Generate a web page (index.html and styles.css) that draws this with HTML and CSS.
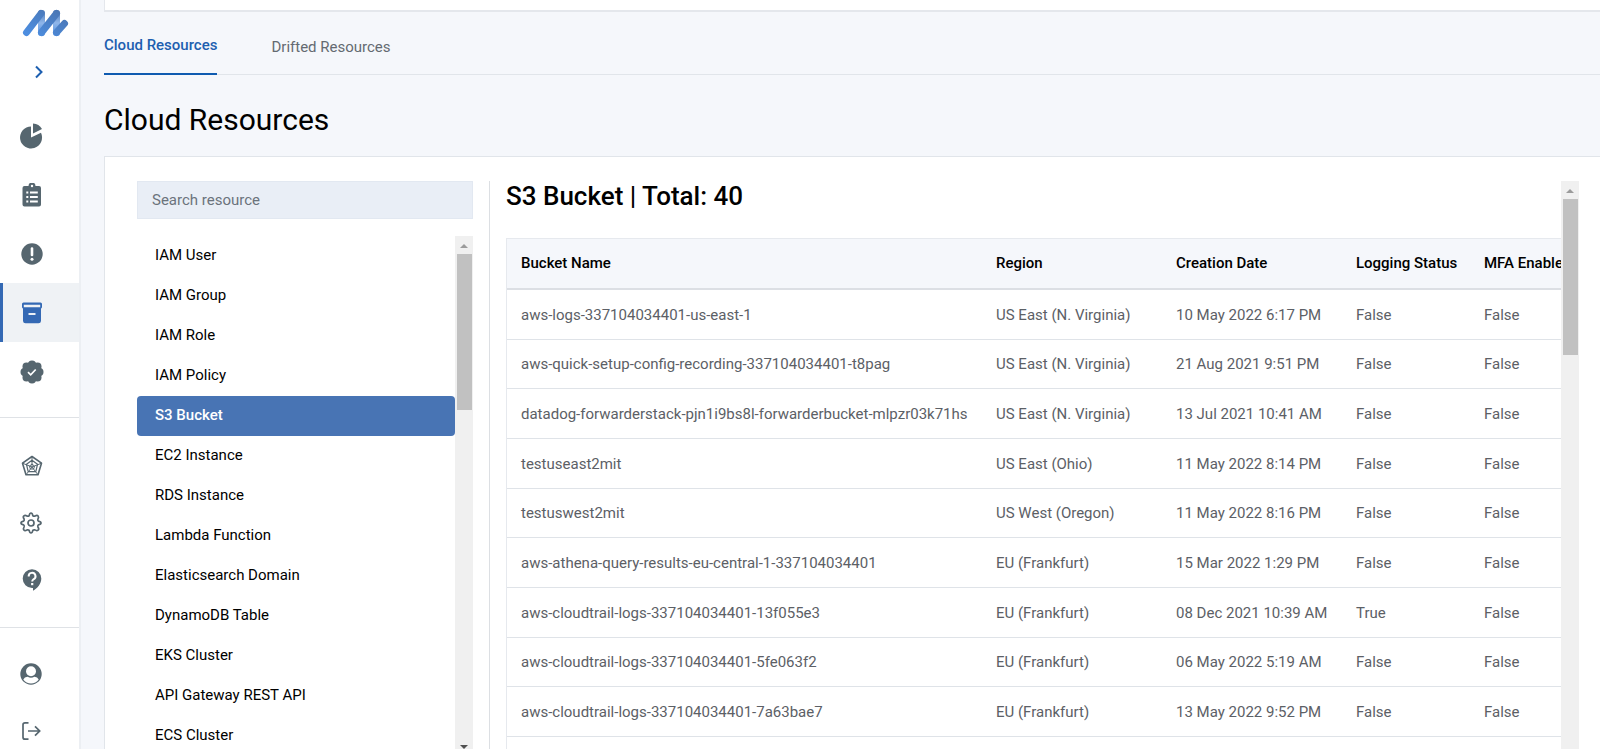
FILE: index.html
```html
<!DOCTYPE html>
<html lang="en">
<head>
<meta charset="utf-8">
<title>Cloud Resources</title>
<link rel="stylesheet" href="styles.css">
</head>
<body>
<div class="app">
  <nav class="sidebar" aria-label="Main">
    <a class="logo" href="#" aria-label="Home">
      <svg width="48" height="30" viewBox="0 0 48 30">
        <defs>
          <linearGradient id="up" x1="0" y1="1" x2="1" y2="0"><stop offset="0" stop-color="#4d8ee0"/><stop offset="1" stop-color="#4a76b4"/></linearGradient>
          <linearGradient id="down" x1="0" y1="0" x2="0" y2="1"><stop offset="0" stop-color="#4a76b4"/><stop offset=".5" stop-color="#8fb6ea"/><stop offset="1" stop-color="#4d8ee0"/></linearGradient>
        </defs>
        <rect x="16" y="2" width="7" height="26" rx="3" fill="url(#down)"/>
        <rect x="31" y="2" width="7" height="26" rx="3" fill="url(#down)"/>
        <g fill="none" stroke="url(#up)" stroke-width="7" stroke-linecap="round">
          <path d="M4.500 24.500 19 5.500M19.500 24.500 34.500 5.500M34.500 24.500 42.500 15.500"/>
        </g>
      </svg>
    </a>
    <button class="expand" aria-label="Expand menu">
      <svg width="10" height="14" viewBox="0 0 10 14"><path d="M2 1.500 7.500 7 2 12.500" fill="none" stroke="#1d5fb0" stroke-width="2"/></svg>
    </button>
    <div class="group group-main">
      <a class="item wide" href="#" aria-label="Dashboard">
        <svg width="24" height="26" viewBox="0 0 24 26" fill="currentColor"><path d="M12 3.500V14.500L22 9.800A11 11 0 1 1 12 3.500Z"/><path d="M14 .5A10.500 10.500 0 0 1 23 6L14 10.500Z"/></svg>
      </a>
      <a class="item" href="#" aria-label="Reports">
        <svg width="20" height="24" viewBox="0 0 20 24"><path fill="currentColor" d="M2.500 3H6.500A3.500 3.500 0 0 1 13.500 3H17A2 2 0 0 1 19 5V21.500A2 2 0 0 1 17 23.500H2.500A2 2 0 0 1 .5 21.500V5A2 2 0 0 1 2.500 3Z"/><circle cx="10" cy="3" r="1.200" fill="#fff"/><path stroke="#fff" stroke-width="1.800" d="M4.300 9.500H6.300M8 9.500H15.800M4.300 14H6.300M8 14H15.800M4.300 18.500H6.300M8 18.500H15.800"/></svg>
      </a>
      <a class="item" href="#" aria-label="Alerts">
        <svg width="22" height="22" viewBox="0 0 22 22"><circle cx="11" cy="11" r="10.700" fill="currentColor"/><path d="M11 5.500V12" stroke="#fff" stroke-width="2.600" stroke-linecap="round"/><circle cx="11" cy="16.300" r="1.500" fill="#fff"/></svg>
      </a>
      <a class="item active" href="#" aria-label="Resources">
        <svg width="20" height="22" viewBox="0 0 20 22"><path fill="currentColor" fill-rule="evenodd" d="M1.500.5H18.500A1.500 1.500 0 0 1 20 2V5A2 2 0 0 1 19 6.500V19A2.500 2.500 0 0 1 16.500 21.300H3.500A2.500 2.500 0 0 1 1 19V6.500A2 2 0 0 1 0 5V2A1.500 1.500 0 0 1 1.500.5ZM1.800 2.700V5.300H18.200V2.700Z"/><path d="M6.500 12H13.500" stroke="#fff" stroke-width="1.800"/></svg>
      </a>
      <a class="item" href="#" aria-label="Compliance">
        <svg width="24" height="24" viewBox="0 0 24 24"><g fill="currentColor"><circle cx="12" cy="12" r="10"/><circle cx="12" cy="4.500" r="4"/><circle cx="17.500" cy="6.500" r="4"/><circle cx="19.500" cy="12" r="4"/><circle cx="17.500" cy="17.500" r="4"/><circle cx="12" cy="19.500" r="4"/><circle cx="6.500" cy="17.500" r="4"/><circle cx="4.500" cy="12" r="4"/><circle cx="6.500" cy="6.500" r="4"/></g><path d="M8 12.200 10.700 14.800 15.700 9.500" fill="none" stroke="#fff" stroke-width="1.700"/></svg>
      </a>
    </div>
    <div class="group group-tools">
      <a class="item" href="#" aria-label="Coverage">
        <svg width="22" height="22" viewBox="0 0 22 22" fill="none" stroke="currentColor" stroke-width="1.600" stroke-linejoin="round"><path d="M11 1.500 20.500 8.200 17 19.800H5L1.500 8.200Z"/><path d="M11 5.300 16.500 9.300 14.800 16.600H7.200L5.500 9.300Z" stroke-width="1.200"/><path d="M11 9 13.600 11.200 12.600 14H9.400L8.400 11.200Z M11 1.500V12M1.500 8.200 11 12 20.500 8.200M5 19.800 11 12 17 19.800" stroke-width="1"/></svg>
      </a>
      <a class="item wide" href="#" aria-label="Settings">
        <svg width="22" height="22" viewBox="0 0 22 22" fill="none" stroke="currentColor" stroke-width="1.700" stroke-linejoin="round"><circle cx="11" cy="11" r="3"/><path d="M9.200 3.600Q9.700 1 11 1T12.800 3.600Q13.600 4.500 14.900 4.100Q17.100 2.600 18.100 3.900T17.900 7.100Q17.500 8.400 18.400 9.200Q21 9.700 21 11T18.400 12.800Q17.500 13.600 17.900 14.900Q19.400 17.100 18.100 18.100T14.900 17.900Q13.600 17.500 12.800 18.400Q12.300 21 11 21T9.200 18.400Q8.400 17.500 7.100 17.900Q4.900 19.400 3.900 18.100T4.100 14.900Q4.500 13.600 3.600 12.800Q1 12.300 1 11T3.600 9.200Q4.500 8.400 4.100 7.100Q2.600 4.900 3.900 3.900T7.100 4.100Q8.400 4.500 9.200 3.600Z"/></svg>
      </a>
      <a class="item" href="#" aria-label="Help">
        <svg width="20" height="22" viewBox="0 0 20 22"><path fill="currentColor" d="M10 .3A9.300 9.300 0 0 1 19.300 9.600C19.300 14.800 15.500 19.500 11 21.700V18.900H10A9.300 9.300 0 0 1 10 .3Z"/><path d="M6.700 7.500A3.400 3.400 0 1 1 11.500 10.300Q10.200 11.200 10.200 12.600" fill="none" stroke="#fff" stroke-width="2"/><rect x="9.100" y="14" width="2.200" height="2.200" fill="#fff"/></svg>
      </a>
    </div>
    <div class="group group-user">
      <a class="item wide" href="#" aria-label="Account">
        <svg width="22" height="22" viewBox="0 0 22 22"><circle cx="11" cy="11" r="10.700" fill="currentColor"/><circle cx="11" cy="8.300" r="5" fill="#fff"/><path fill="#fff" d="M3.300 16.500Q4.600 13.600 7.600 13.700 11 15.700 14.400 13.700 17.400 13.600 18.700 16.500A9.500 9.500 0 0 1 3.300 16.500Z"/></svg>
      </a>
      <a class="item wide" href="#" aria-label="Log out">
        <svg width="20" height="20" viewBox="0 0 20 20" fill="none" stroke="currentColor" stroke-width="1.700"><path d="M7.500 1.800H4Q2 1.800 2 3.800V16.200Q2 18.200 4 18.200H7.500M7 10H18.500M14 5.300 18.700 10 14 14.700"/></svg>
      </a>
    </div>
  </nav>

  <main class="content">
    <div class="summary-card"></div>
    <div class="tabs">
      <a class="tab selected" href="#">Cloud Resources</a>
      <a class="tab" href="#">Drifted Resources</a>
    </div>
    <h1 class="title">Cloud Resources</h1>
    <section class="panel">
      <div class="picker">
        <input class="search" type="text" placeholder="Search resource" aria-label="Search resource">
        <div class="scroll-area">
          <ul class="types">
            <li><a href="#">IAM User</a></li>
            <li><a href="#">IAM Group</a></li>
            <li><a href="#">IAM Role</a></li>
            <li><a href="#">IAM Policy</a></li>
            <li><a class="current" href="#">S3 Bucket</a></li>
            <li><a href="#">EC2 Instance</a></li>
            <li><a href="#">RDS Instance</a></li>
            <li><a href="#">Lambda Function</a></li>
            <li><a href="#">Elasticsearch Domain</a></li>
            <li><a href="#">DynamoDB Table</a></li>
            <li><a href="#">EKS Cluster</a></li>
            <li><a href="#">API Gateway REST API</a></li>
            <li><a href="#">ECS Cluster</a></li>
          </ul>
          <div class="scrollbar" aria-hidden="true"><span class="arrow up"></span><span class="thumb"></span><span class="arrow down"></span></div>
        </div>
      </div>
      <div class="details">
        <div class="details-body">
          <h2 class="subtitle">S3 Bucket | Total: 40</h2>
          <table class="buckets">
            <colgroup><col class="c-name"><col class="c-region"><col class="c-date"><col class="c-log"><col class="c-mfa"></colgroup>
            <thead><tr><th>Bucket Name</th><th>Region</th><th>Creation Date</th><th>Logging Status</th><th>MFA Enabled</th></tr></thead>
            <tbody>
              <tr><td>aws-logs-337104034401-us-east-1</td><td>US East (N. Virginia)</td><td>10 May 2022 6:17 PM</td><td>False</td><td>False</td></tr>
              <tr><td>aws-quick-setup-config-recording-337104034401-t8pag</td><td>US East (N. Virginia)</td><td>21 Aug 2021 9:51 PM</td><td>False</td><td>False</td></tr>
              <tr><td>datadog-forwarderstack-pjn1i9bs8l-forwarderbucket-mlpzr03k71hs</td><td>US East (N. Virginia)</td><td>13 Jul 2021 10:41 AM</td><td>False</td><td>False</td></tr>
              <tr><td>testuseast2mit</td><td>US East (Ohio)</td><td>11 May 2022 8:14 PM</td><td>False</td><td>False</td></tr>
              <tr><td>testuswest2mit</td><td>US West (Oregon)</td><td>11 May 2022 8:16 PM</td><td>False</td><td>False</td></tr>
              <tr><td>aws-athena-query-results-eu-central-1-337104034401</td><td>EU (Frankfurt)</td><td>15 Mar 2022 1:29 PM</td><td>False</td><td>False</td></tr>
              <tr><td>aws-cloudtrail-logs-337104034401-13f055e3</td><td>EU (Frankfurt)</td><td>08 Dec 2021 10:39 AM</td><td>True</td><td>False</td></tr>
              <tr><td>aws-cloudtrail-logs-337104034401-5fe063f2</td><td>EU (Frankfurt)</td><td>06 May 2022 5:19 AM</td><td>False</td><td>False</td></tr>
              <tr><td>aws-cloudtrail-logs-337104034401-7a63bae7</td><td>EU (Frankfurt)</td><td>13 May 2022 9:52 PM</td><td>False</td><td>False</td></tr>
              <tr><td></td><td></td><td></td><td></td><td></td></tr>
            </tbody>
          </table>
        </div>
        <div class="scrollbar" aria-hidden="true"><span class="arrow up"></span><span class="thumb"></span></div>
      </div>
    </section>
  </main>
</div>
</body>
</html>
```
FILE: styles.css
```css
* { box-sizing: border-box; }

body {
  margin: 0;
  font-family: Roboto, "Liberation Sans", sans-serif;
  font-size: 15px;
  color: #000;
  background: #f5f7fb;
}

a { color: inherit; text-decoration: none; }

.app {
  display: flex;
  height: 100vh;
  overflow: hidden;
}

/* Sidebar */
.sidebar {
  flex: none;
  width: 81px;
  display: flex;
  flex-direction: column;
  background: #fff;
  border-right: 2px solid #eceff3;
  color: #56666f;
}
.logo { flex: none; height: 38px; padding: 8px 0 0 22px; }
.logo svg, .item svg, .expand svg { display: block; }
.expand {
  flex: none;
  height: 68px;
  padding: 0 0 0 34px;
  border: 0;
  background: none;
}
.group { flex: none; display: flex; flex-direction: column; }
.group + .group { border-top: 1px solid #dfe2e6; }
.item {
  display: flex;
  align-items: center;
  justify-content: center;
  height: 57px;
  padding-right: 15px;
}
.item.wide { padding-right: 17px; }
.group-main { padding-bottom: 16px; }
.group-main .item { height: 59px; }
.group-tools { padding: 19px 0; }
.group-user { padding-top: 17px; }
.item.active {
  background: #eff2f5;
  border-left: 3px solid #3469b4;
  padding-right: 18px;
  color: #3469b4;
}

/* Main column */
.content {
  flex: 1;
  min-width: 0;
  display: flex;
  flex-direction: column;
  padding-left: 23px;
}
.summary-card {
  flex: none;
  height: 12px;
  background: #fff;
  border: solid #e4e7ec;
  border-width: 0 0 2px 1px;
}
.tabs {
  flex: none;
  display: flex;
  gap: 54px;
  height: 63px;
  border-bottom: 1px solid #e1e5ea;
  color: #646a71;
}
.tab { height: 63px; padding-top: 2px; line-height: 67px; }
.tab.selected {
  padding-top: 0;
  border-bottom: 2px solid #0f5bb0;
  color: #1d5fb0;
  font-weight: 500;
}
.title {
  flex: none;
  margin: 26px 0 17px;
  font-size: 30px;
  font-weight: 400;
  line-height: 38px;
}
.panel {
  flex: 1;
  min-height: 0;
  display: flex;
  padding: 24px 21px 0 32px;
  background: #fff;
  border: solid #e1e5ea;
  border-width: 1px 0 0 1px;
}

/* Resource type list */
.picker {
  flex: none;
  width: 353px;
  display: flex;
  flex-direction: column;
  gap: 17px;
  padding-right: 16px;
  border-right: 1px solid #dcdfe3;
}
.search {
  flex: none;
  height: 38px;
  padding: 0 14px;
  border: 1px solid #e2e8f1;
  background: #e9eef6;
  font: inherit;
}
.search::placeholder { color: #6b737c; opacity: 1; }
.scroll-area { display: flex; min-height: 0; overflow: hidden; }
.types { flex: 1; margin: 0; padding: 0; list-style: none; }
.types a {
  display: block;
  padding: 0 18px 2px;
  border-radius: 4px;
  line-height: 38px;
}
.types .current { background: #4874b4; color: #fff; font-weight: 500; }

/* Scroll strip */
.scrollbar {
  flex: none;
  width: 18px;
  display: flex;
  flex-direction: column;
  align-items: center;
  background: #f0f0f0;
}
.arrow {
  flex: none;
  width: 8px;
  height: 4px;
  background: #9b9b9b;
}
.arrow.up { margin: 8px 0 6px; clip-path: polygon(50% 0, 100% 100%, 0 100%); }
.arrow.down { margin: auto 0 0; background: #505050; clip-path: polygon(0 0, 100% 0, 50% 100%); }
.thumb { flex: none; width: 15px; height: 156px; background: #c1c1c1; }

/* Bucket table */
.details { flex: 1; min-width: 0; display: flex; padding-left: 16px; }
.details-body { flex: 1; min-width: 0; overflow: hidden; }
.subtitle {
  margin: 0 0 27px;
  font-size: 26px;
  font-weight: 500;
  line-height: 30px;
}
.buckets {
  width: 1160px;
  table-layout: fixed;
  border-collapse: separate;
  border-spacing: 0;
  border: 1px solid #e6e9ee;
}
.c-name { width: 475px; }
.c-region { width: 180px; }
.c-date { width: 180px; }
.c-log { width: 128px; }
.buckets th, .buckets td {
  height: 50px;
  padding: 0 14px;
  text-align: left;
  font-weight: 400;
  white-space: nowrap;
  border-bottom: 1px solid #dfe3e8;
}
.buckets th {
  height: 51px;
  padding-bottom: 2px;
  background: #f5f7fb;
  border-bottom: 2px solid #dcdfe4;
  font-weight: 500;
}
.buckets td { color: #5c6066; }
.buckets tr:nth-child(3n+2) td { height: 49px; }
```
